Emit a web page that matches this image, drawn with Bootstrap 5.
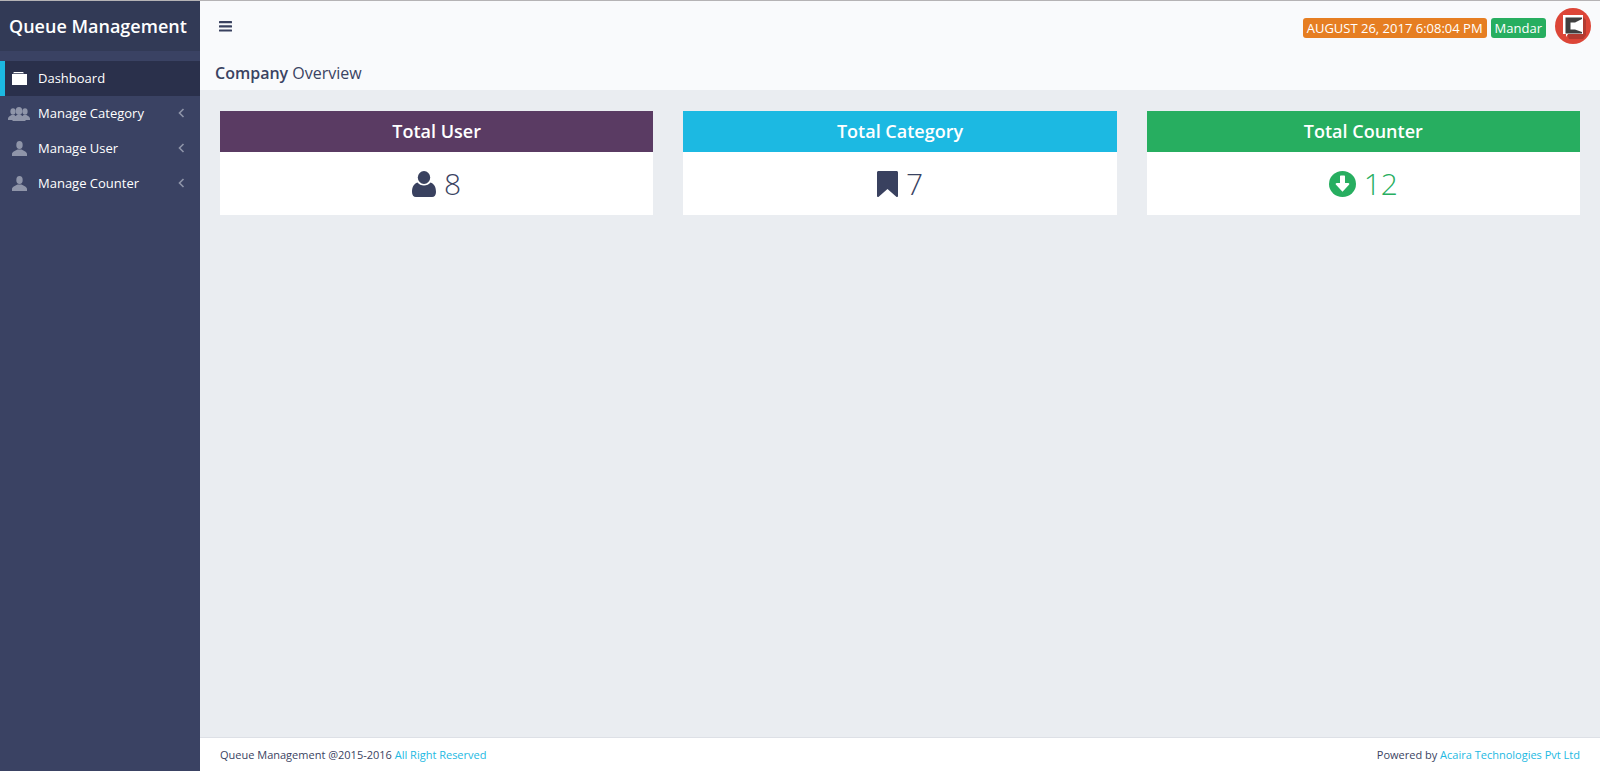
<!DOCTYPE html>
<html lang="en">
<head>
<meta charset="utf-8">
<title>Queue Management</title>
<link href="https://cdn.jsdelivr.net/npm/bootstrap@5.3.0/dist/css/bootstrap.min.css" rel="stylesheet">
<style>
html,body{height:100%;overflow:hidden}
body{font-family:"Open Sans","Liberation Sans",sans-serif;background:#eaedf1;color:#3a4362;border-top:1px solid #b5b3b5}
.shell{height:770px}
.side{width:200px;background:#3a4263;flex:none}
.brand{height:50px;background:#323a56;color:#fff;font-size:18px;font-weight:600;line-height:50px;padding-left:9px;white-space:nowrap}
.menu{margin-top:10px}
.menu a{display:flex;align-items:center;height:35px;color:#fff;font-size:13px;text-decoration:none;position:relative}
.menu a.on{background:#2a304b;border-left:5px solid #1cb9e2}
.mi{width:38px;flex:none;display:flex;justify-content:center;fill:#8f95a9}
.menu a.on .mi{width:33px;padding-right:4px;fill:#fff}
.chev{position:absolute;left:178px;top:12px}
.topbar{height:89px;background:#f9fafc;flex:none}
.burger{padding:20px 0 0 19px;height:50px}
.ttl{font-size:16px;padding:11px 0 0 15px;line-height:22px}
.tag{display:inline-block;font-size:13px;line-height:20px;height:20px;padding:0 4px;color:#fff;border-radius:3px;white-space:nowrap;margin-top:10px}
.tag-o{background:#e67e22}
.tag-g{background:#27ae60}
.statuses{padding:7px 9px 0 0;gap:4px}
.logo{margin-left:5px}
.stage{padding:21px 20px 0}
.tiles{gap:30px}
.tile{flex:1 1 0;background:#fff;height:104px}
.tile-h{height:41px;line-height:41px;text-align:center;color:#fff;font-size:18px;font-weight:600}
.tile-b{height:63px;display:flex;align-items:center;justify-content:center;gap:8px;font-size:30px;font-weight:300}
.foot{height:34px;background:#fff;border-top:1px solid #dde0e6;font-size:11px;line-height:33px;padding:0 20px;flex:none;color:#3a4362}
.foot a{color:#1cb9e2;text-decoration:none}
</style>
</head>
<body>
<div class="shell d-flex">
  <aside class="side">
    <div class="brand">Queue Management</div>
    <nav class="menu">
      <a class="on" href="#"><span class="mi"><svg width="15" height="13" viewBox="0 0 15 13"><path d="M2 0h9l1 1.200H1z"/><path d="M0 2h15v11H0z"/></svg></span>Dashboard</a>
      <a href="#"><span class="mi"><svg width="22" height="14" viewBox="0 0 22 14"><ellipse cx="5" cy="4.500" rx="2.600" ry="3.200"/><ellipse cx="17" cy="4.500" rx="2.600" ry="3.200"/><path d="M0 13v-1.500c0-1.500 2-2.500 3.500-3.500h3l4 5zM22 13v-1.500c0-1.500-2-2.500-3.500-3.500h-3l-4 5z"/><ellipse cx="11" cy="4" rx="3.300" ry="4"/><path d="M4.500 14v-2c0-1.800 2.500-2.800 4.500-4h4c2 1.200 4.500 2.200 4.500 4v2z"/></svg></span>Manage Category<svg class="chev" width="7" height="10" viewBox="0 0 7 10"><path d="M5.500 1L1.500 5l4 4" fill="none" stroke="#8f95a9" stroke-width="1.600"/></svg></a>
      <a href="#"><span class="mi"><svg width="15" height="15" viewBox="0 0 15 15"><ellipse cx="7.500" cy="4" rx="3.200" ry="4"/><path d="M0 15v-2c0-2 3-3 5.500-4.500h4C12 10 15 11 15 13v2z"/></svg></span>Manage User<svg class="chev" width="7" height="10" viewBox="0 0 7 10"><path d="M5.500 1L1.500 5l4 4" fill="none" stroke="#8f95a9" stroke-width="1.600"/></svg></a>
      <a href="#"><span class="mi"><svg width="15" height="15" viewBox="0 0 15 15"><ellipse cx="7.500" cy="4" rx="3.200" ry="4"/><path d="M0 15v-2c0-2 3-3 5.500-4.500h4C12 10 15 11 15 13v2z"/></svg></span>Manage Counter<svg class="chev" width="7" height="10" viewBox="0 0 7 10"><path d="M5.500 1L1.500 5l4 4" fill="none" stroke="#8f95a9" stroke-width="1.600"/></svg></a>
    </nav>
  </aside>
  <div class="d-flex flex-column flex-grow-1">
    <header class="topbar">
      <div class="d-flex justify-content-between">
        <div class="burger"><svg class="d-block" width="13" height="11" viewBox="0 0 13 11" fill="#39415f"><rect width="13" height="2.200" y="0" rx=".5"/><rect width="13" height="2.200" y="4.200" rx=".5"/><rect width="13" height="2.200" y="8.400" rx=".5"/></svg></div>
        <div class="statuses d-flex align-items-start">
          <span class="tag tag-o">AUGUST 26, 2017 6:08:04 PM</span>
          <span class="tag tag-g">Mandar</span>
          <svg class="logo" width="36" height="36" viewBox="0 0 36 36"><circle cx="18" cy="18" r="18" fill="#dc4537"/><path d="M12 26h16V9l3 3v15l-3 4H14z" fill="#b23a30"/><path d="M8 7h20v19H13l-2 3v-3H8z" fill="#fff"/><path d="M10.500 9.500H27v1.500l-7 3.500h-4.500v7H20l7 2.500v1.500H10.500z" fill="#3f3f3f"/></svg>
        </div>
      </div>
      <div class="ttl"><b class="fw-semibold">Company</b> Overview</div>
    </header>
    <main class="stage flex-grow-1">
      <div class="tiles d-flex">
        <section class="tile">
          <div class="tile-h" style="background:#5a3b63">Total User</div>
          <div class="tile-b"><svg width="24" height="26" viewBox="0 0 24 26" fill="#39415f"><ellipse cx="12" cy="6.500" rx="6.200" ry="6.500"/><path d="M0 21c0-5 2-8.500 5.500-9.500 1.500 2 3.800 3 6.500 3s5-1 6.500-3C22 12.500 24 16 24 21c0 3-1.500 5-4 5H4c-2.500 0-4-2-4-5z"/></svg><span>8</span></div>
        </section>
        <section class="tile">
          <div class="tile-h" style="background:#1cb9e2">Total Category</div>
          <div class="tile-b"><svg width="21" height="26" viewBox="0 0 21 26" fill="#39415f"><path d="M1.500 0h18c.9 0 1.500.6 1.500 1.500V25c0 1-1 1.300-1.700.7L10.500 18l-8.800 7.700C1 26.300 0 26 0 25V1.500C0 .6.600 0 1.500 0z"/></svg><span>7</span></div>
        </section>
        <section class="tile">
          <div class="tile-h" style="background:#27ae60">Total Counter</div>
          <div class="tile-b" style="color:#27ae60"><svg width="27" height="26" viewBox="0 0 27 26"><ellipse cx="13.500" cy="13" rx="13.500" ry="13" fill="#27ae60"/><path d="M11 5.500c0-.6.400-1 1-1h3c.6 0 1 .4 1 1V12h3.200c1 0 1.500 1 .8 1.700l-6.500 7-6.500-7c-.7-.7-.2-1.700.8-1.700H11z" fill="#fff"/></svg><span>12</span></div>
        </section>
      </div>
    </main>
    <footer class="foot d-flex justify-content-between">
      <div>Queue Management @2015-2016 <a href="#">All Right Reserved</a></div>
      <div>Powered by <a href="#">Acaira Technologies Pvt Ltd</a></div>
    </footer>
  </div>
</div>
<script src="https://cdn.jsdelivr.net/npm/bootstrap@5.3.0/dist/js/bootstrap.bundle.min.js"></script>
</body>
</html>
